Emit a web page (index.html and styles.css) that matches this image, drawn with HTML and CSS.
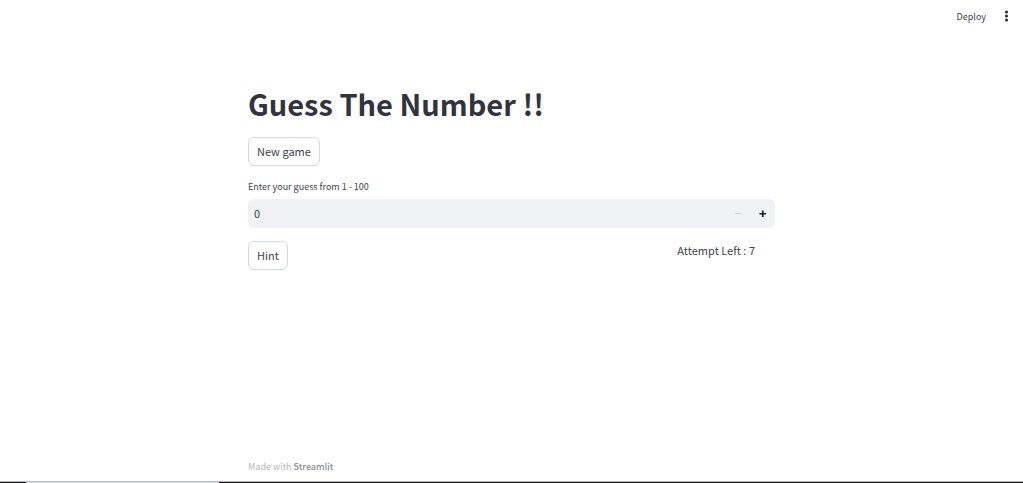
FILE: index.html
```html
<!DOCTYPE html>
<html lang="en">
<head>
<meta charset="utf-8">
<title>Guess The Number</title>
<link rel="stylesheet" href="styles.css">
</head>
<body>
<header class="toolbar">
  <button class="deploy" type="button">Deploy</button>
  <button class="menu" type="button" aria-label="Main menu"><svg width="16" height="16" viewBox="0 0 16 16" fill="currentColor"><circle cx="7.5" cy="4" r="1.5"/><circle cx="7.5" cy="8" r="1.5"/><circle cx="7.5" cy="12" r="1.5"/></svg></button>
</header>
<main class="content">
  <h1 class="title">Guess The Number !!</h1>
  <button class="btn" type="button">New game</button>
  <label class="label" for="guess">Enter your guess from 1 - 100</label>
  <div class="number">
    <input class="number-input" id="guess" type="text" inputmode="numeric" value="0">
    <button class="step" type="button" aria-label="Decrease" disabled><svg width="8" height="8" viewBox="0 0 8 8"><path d="M1 3.500h6" stroke="currentColor" stroke-width="1"/></svg></button>
    <button class="step" type="button" aria-label="Increase"><svg width="8" height="8" viewBox="0 0 8 8"><path d="M0.500 3.750h6.500M3.750 0.500v6.500" stroke="currentColor" stroke-width="1.700"/></svg></button>
  </div>
  <div class="row">
    <button class="btn" type="button">Hint</button>
    <p class="attempts">Attempt Left : 7</p>
  </div>
</main>
<footer class="footer"><p class="credit">Made with <a class="credit-link" href="#">Streamlit</a></p></footer>
<div class="edge"><span class="edge-light"></span></div>
</body>
</html>
```
FILE: styles.css
```css
* { box-sizing: border-box; }
body {
  margin: 0;
  min-height: 100vh;
  display: flex;
  flex-direction: column;
  background: #fff;
  color: #41434e;
  font: 11px/18px "Noto Sans CJK SC", "Noto Sans", sans-serif;
}
button, input { font: inherit; color: inherit; }
button { padding: 0; border: 0; background: none; }
h1, p { margin: 0; }
svg { display: block; }
.toolbar {
  height: 32px;
  padding-right: 8px;
  display: flex;
  justify-content: flex-end;
  align-items: center;
  gap: 13px;
}
.deploy { padding-top: 2px; font-size: 9px; }
.menu { color: #22242f; }
.content, .footer { width: 100%; max-width: 527px; margin: 0 auto; }
.content {
  flex: 1;
  padding-top: 51px;
  display: flex;
  flex-direction: column;
  align-items: flex-start;
}
.title {
  margin-bottom: 14px;
  color: #31333f;
  font-size: 29px;
  line-height: 40px;
  font-weight: 700;
}
.btn {
  height: 29px;
  padding: 0 8px 2px;
  border: 1px solid #d3d8df;
  border-radius: 6px;
  background: #fff;
}
.label { margin-top: 12px; margin-bottom: 3px; font-size: 9px; }
.number {
  width: 100%;
  height: 29px;
  display: flex;
  border-radius: 6px;
  background: #f0f2f6;
  overflow: hidden;
}
.number-input {
  flex: 1;
  min-width: 0;
  padding: 0 6px 2px;
  border: 0;
  background: none;
}
.step { width: 25px; display: grid; place-items: center; color: #1b1d28; }
.step:disabled { color: #cfd4da; }
.row {
  width: 100%;
  margin-top: 13px;
  padding-right: 20px;
  display: flex;
  justify-content: space-between;
}
.footer { padding-bottom: 5px; font-size: 9px; color: #b4b5b9; }
.credit-link { color: #8b8c94; text-decoration: none; font-weight: 500; }
.edge {
  height: 2px;
  padding-left: 26px;
  border-top: 1px solid #bbb;
  background: #111;
}
.edge-light { display: block; width: 193px; height: 1px; background: #dcdfe0; }
```
